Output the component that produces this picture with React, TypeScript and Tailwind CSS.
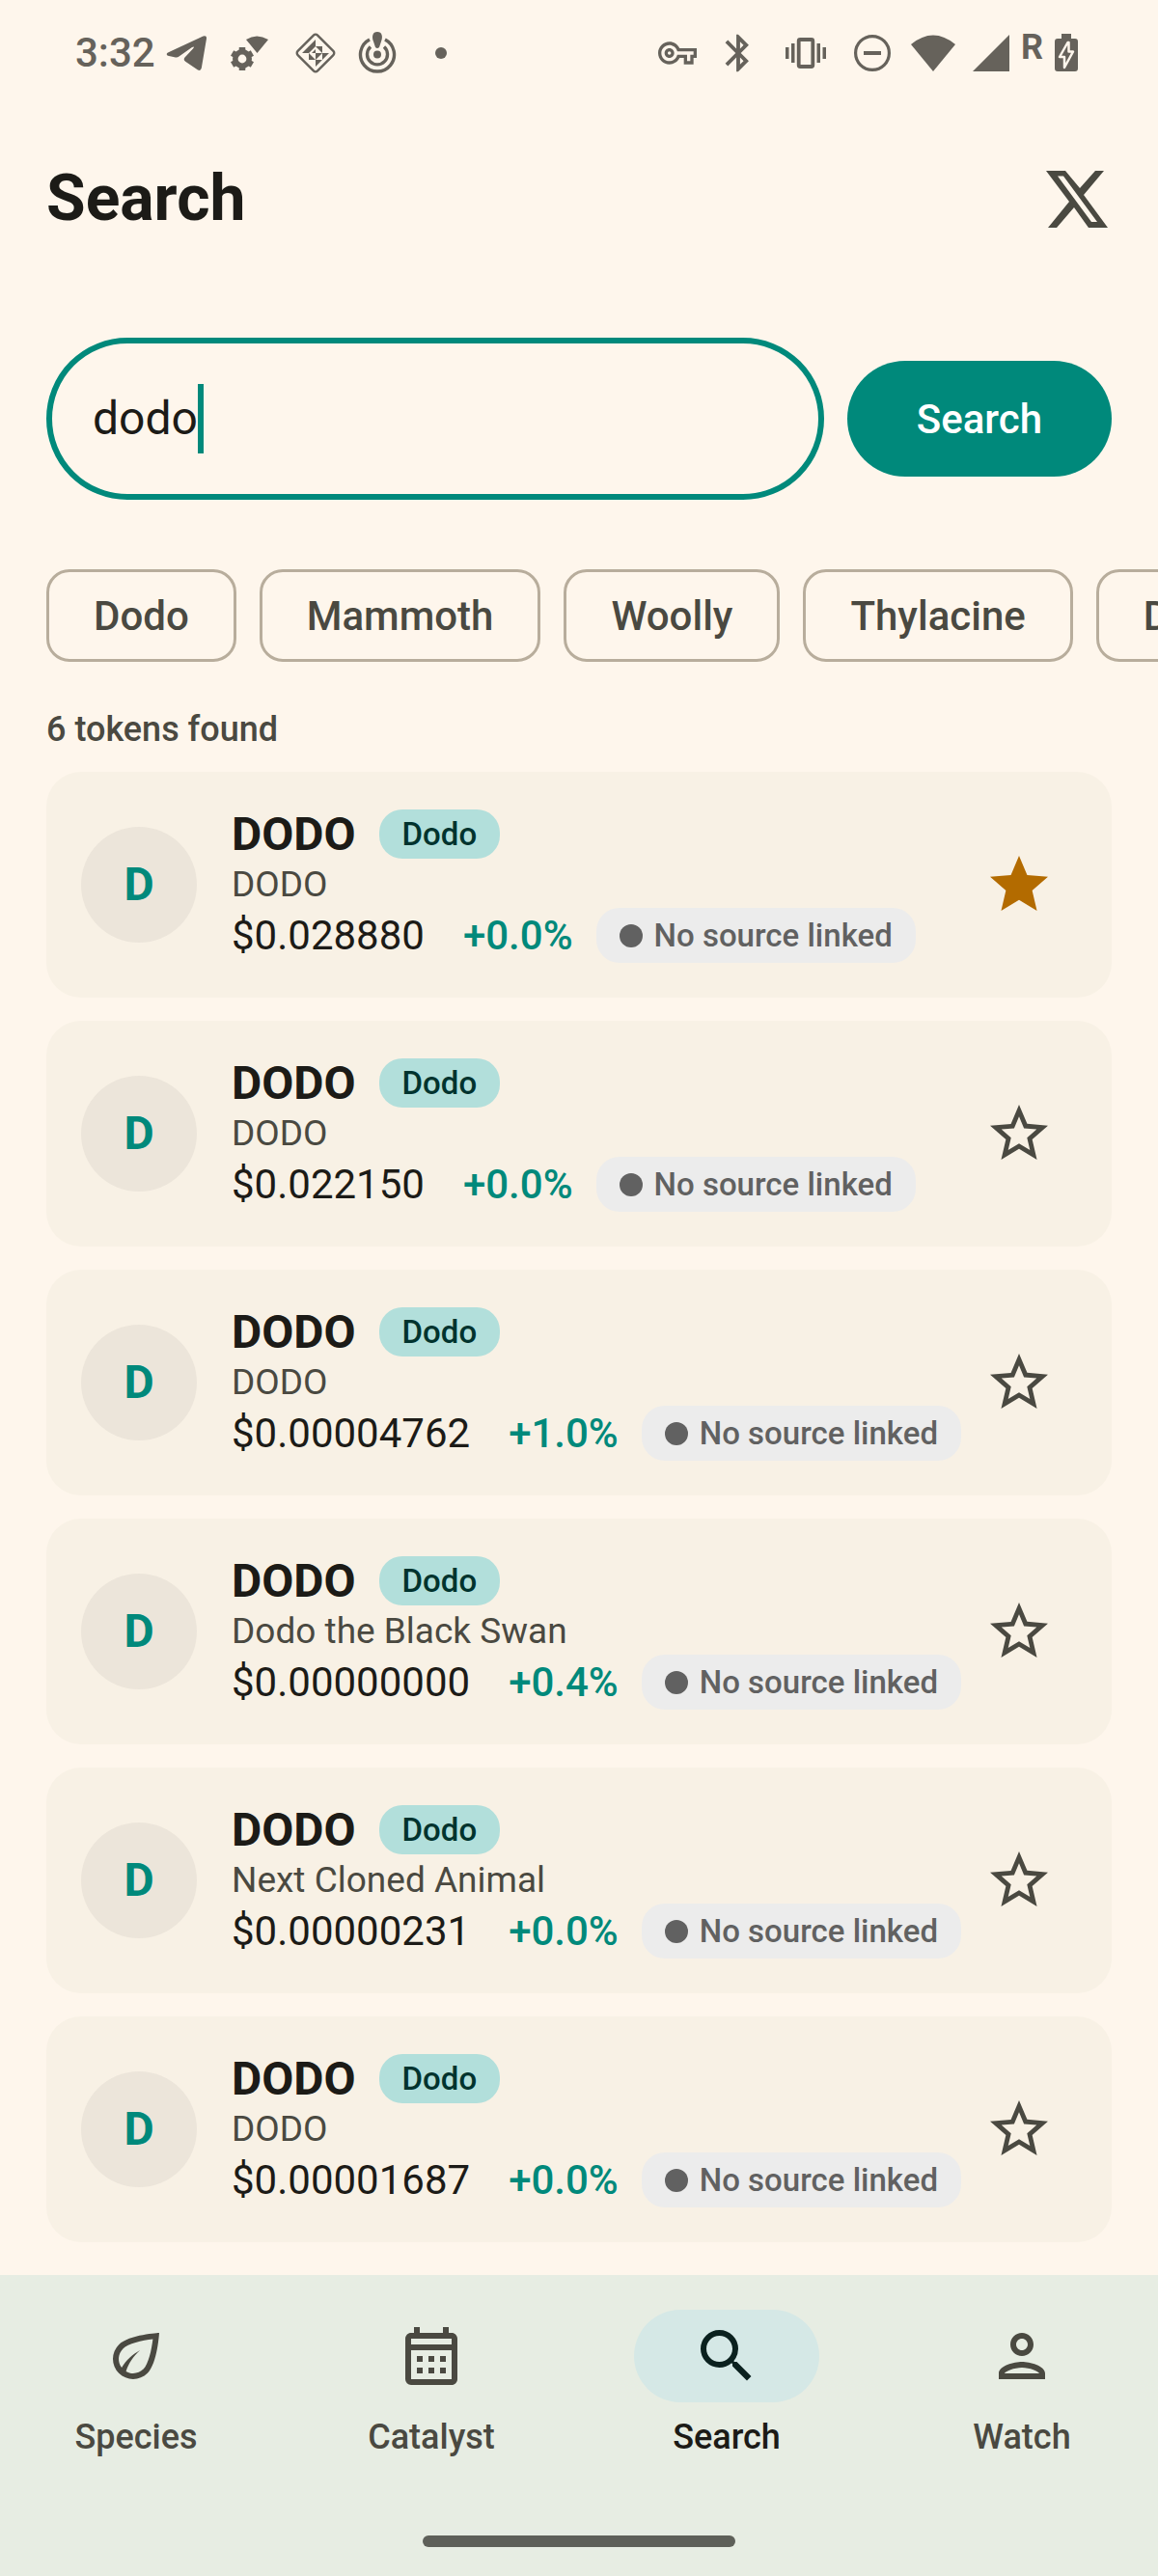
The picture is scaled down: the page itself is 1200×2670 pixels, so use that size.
import React, { useState } from 'react';
import {
    MdBluetooth,
    MdOutlineCalendarMonth,
    MdOutlineEco,
    MdOutlinePerson,
    MdOutlineVpnKey,
    MdSearch,
    MdStar,
    MdStarOutline,
} from 'react-icons/md';

interface Token {
    name: string;
    price: string;
    change: string;
    watched: boolean;
}

const initialTokens: Token[] = [
    { name: 'DODO', price: '$0.028880', change: '+0.0%', watched: true },
    { name: 'DODO', price: '$0.022150', change: '+0.0%', watched: false },
    { name: 'DODO', price: '$0.00004762', change: '+1.0%', watched: false },
    { name: 'Dodo the Black Swan', price: '$0.00000000', change: '+0.4%', watched: false },
    { name: 'Next Cloned Animal', price: '$0.00000231', change: '+0.0%', watched: false },
    { name: 'DODO', price: '$0.00001687', change: '+0.0%', watched: false },
];

const suggestions = ['Dodo', 'Mammoth', 'Woolly', 'Thylacine', 'Dire Wolf'];

const tabs = [
    { label: 'Species', icon: MdOutlineEco },
    { label: 'Catalyst', icon: MdOutlineCalendarMonth },
    { label: 'Search', icon: MdSearch },
    { label: 'Watch', icon: MdOutlinePerson },
];

const StatusBar: React.FC = () => (
    <div className="flex h-[110px] items-center justify-between pr-[83px] pl-[78px] text-[#66625b]">
        <div className="flex items-center">
            <span className="text-[42px] leading-[48px] font-medium">3:32</span>
            <svg className="ml-[10px] h-[40px] w-[44px]" viewBox="0 0 44 40" fill="currentColor">
                <path d="M3 19.500C1 20.500 1.500 22.500 4 23L11 24.500Q13 24.800 14.500 23.500L28 14Q31.500 12.500 29 15.500L20.500 24.500Q18.500 27 21.500 29L34 37.500Q37 39 37.800 35.500L43 5Q43.300 1.200 39.500 2.500Z" />
            </svg>
            <svg className="ml-6 h-[40px] w-[42px]" viewBox="0 0 42 40" fill="currentColor">
                <path d="M16 6Q27-1 39 6L27.500 20Z" />
                <g transform="translate(12 26)">
                    <circle r="7.200" fill="none" stroke="currentColor" strokeWidth="5.600" />
                    <path
                        d="M0-12V-7M0 7V12M-10.400-6L-6-3.500M6 3.500L10.400 6M-10.400 6L-6 3.500M6-3.500L10.400-6"
                        stroke="currentColor"
                        strokeWidth="6.500"
                    />
                </g>
            </svg>
            <svg className="ml-6 size-[44px]" viewBox="0 0 44 44" fill="currentColor">
                <rect x="7.500" y="7.500" width="29" height="29" rx="3" transform="rotate(45 22 22)" fill="none" stroke="currentColor" strokeWidth="2.400" />
                <path d="M22 8V15H15ZM8 22H15V15ZM15 15H22L15 22ZM22 15H29V22ZM22 22V18L18 22ZM15 22V29H22ZM22 22H29L22 29ZM29 22H36L29 29ZM22 29H29L22 36Z" />
            </svg>
            <svg className="ml-[22px] h-[44px] w-[40px]" viewBox="0 0 40 44" fill="none" stroke="currentColor" strokeWidth="3.400">
                <path d="M12 8A17.500 17.500 0 1 0 28 8M13 15.500A10.500 10.500 0 1 0 27 15.500" />
                <circle cx="20" cy="23.500" r="4" fill="currentColor" stroke="none" />
                <path d="M20 0C15 0 14 5 16 10L18 16Q20 18 22 16L24 10C26 5 25 0 20 0Z" fill="currentColor" stroke="none" />
            </svg>
            <span className="ml-10 size-3 rounded-full bg-[#66625b]" />
        </div>
        <div className="flex items-center">
            <MdOutlineVpnKey className="size-10" />
            <MdBluetooth className="ml-5 size-[46px]" />
            <svg className="ml-[26px] h-[32px] w-[42px]" viewBox="0 0 42 32" fill="currentColor">
                <path d="M0 10H3.500V22H0ZM6 6H9.500V26H6ZM32.500 6H36V26H32.500ZM38.500 10H42V22H38.500Z" />
                <rect x="13.700" y="2" width="14.600" height="28" rx="1.500" fill="none" stroke="currentColor" strokeWidth="3.800" />
            </svg>
            <svg className="ml-7 size-[40px]" viewBox="0 0 40 40" fill="none" stroke="currentColor" strokeWidth="3.200">
                <circle cx="20" cy="20" r="17.400" />
                <path d="M11 20H29" strokeWidth="4" />
            </svg>
            <svg className="ml-5 h-[38px] w-[46px]" viewBox="0 0 46 38" fill="currentColor">
                <path d="M0 10Q23-9 46 10L23 38Z" />
            </svg>
            <svg className="ml-[18px] size-[38px]" viewBox="0 0 38 38" fill="currentColor">
                <path d="M38 0V38H0Z" />
            </svg>
            <span className="mb-3 ml-3 text-[36px] leading-[36px] font-bold">R</span>
            <svg className="ml-3 h-[40px] w-[24px]" viewBox="0 0 24 40" fill="currentColor">
                <path d="M7 0H17V5H21Q24 5 24 8V36Q24 39 21 39H3Q0 39 0 36V8Q0 5 3 5H7Z" />
                <path d="M13.500 9L5 24H10V35L19 18.500H14.500V9Z" stroke="#fef6ec" strokeWidth="2.500" strokeLinejoin="round" />
            </svg>
        </div>
    </div>
);

const TokenCard: React.FC<{ token: Token; onToggle: () => void }> = ({ token, onToggle }) => (
    <li className="flex items-center rounded-[36px] bg-[#f8f1e5] py-9 pr-6 pl-9">
        <div className="flex size-[120px] shrink-0 items-center justify-center rounded-full bg-[#ece5da] text-[48px] font-bold text-[#00897b]">
            D
        </div>
        <div className="ml-9 min-w-0 flex-1 pt-[3px] whitespace-nowrap">
            <div className="flex h-[51px] items-center gap-6">
                <h2 className="text-[48px] leading-[51px] font-bold text-[#1c1b17]">DODO</h2>
                <span className="rounded-3xl bg-[#b2dfdb] px-6 text-[33px] leading-[51px] font-medium text-[#00332e]">
                    Dodo
                </span>
            </div>
            <p className="pt-[3px] text-[37px] leading-[48px] text-[#4a4941]">{token.name}</p>
            <div className="flex h-[57px] items-center">
                <span className="text-[42px] leading-[57px] text-[#1c1b17]">{token.price}</span>
                <span className="ml-10 text-[42px] leading-[57px] font-medium text-[#00897b]">{token.change}</span>
                <span className="ml-6 flex items-center gap-3 rounded-3xl bg-[#ececec] px-6 text-[33px] leading-[57px] font-medium text-[#616161]">
                    <span className="size-6 rounded-full bg-[#616161]" />
                    No source linked
                </span>
            </div>
        </div>
        <button
            type="button"
            aria-label={token.watched ? 'Remove from watchlist' : 'Add to watchlist'}
            onClick={onToggle}
            className="flex size-[144px] shrink-0 items-center justify-center"
        >
            {token.watched ? (
                <MdStar className="size-[72px] text-[#b36b00]" />
            ) : (
                <MdStarOutline className="size-[72px] text-[#4a4941]" />
            )}
        </button>
    </li>
);

const App: React.FC = () => {
    const [query, setQuery] = useState('dodo');
    const [tokens, setTokens] = useState<Token[]>(initialTokens);

    const toggleWatched = (index: number) => {
        setTokens(tokens.map((t, i) => (i === index ? { ...t, watched: !t.watched } : t)));
    };

    return (
        <div className="flex min-h-screen flex-col overflow-hidden bg-[#fef6ec] font-[Roboto,sans-serif]">
            <StatusBar />

            <header className="flex h-48 items-center justify-between px-12">
                <h1 className="text-[66px] leading-[84px] font-bold text-[#1c1b17]">Search</h1>
                <a href="#x" aria-label="X" className="mr-1">
                    <svg className="h-[60px] w-[64px]" viewBox="0 0 64 60" fill="#4a4941">
                        <path d="M0 1H20L35 19L51 1H60L39 26L64 60H44L29 39L11 60H2L24 33ZM12 6.500L47 54H53L18 6.500Z" fillRule="evenodd" />
                    </svg>
                </a>
            </header>

            <form className="mt-12 flex items-center gap-6 px-12" onSubmit={(e) => e.preventDefault()}>
                {/* Pole wyszukiwania z widocznym kursorem */}
                <label className="flex h-[168px] min-w-0 flex-1 items-center rounded-full border-6 border-[#00897b] px-[42px]">
                    <input
                        aria-label="Search tokens"
                        value={query}
                        onChange={(e) => setQuery(e.target.value)}
                        className="field-sizing-content bg-transparent text-[48px] leading-[72px] text-[#1c1b17] caret-transparent outline-none"
                    />
                    <span className="h-[72px] w-[6px] bg-[#00897b]" />
                </label>
                <button type="submit" className="h-[120px] rounded-full bg-[#00897b] px-[72px] text-[42px] font-medium text-white">
                    Search
                </button>
            </form>

            <div className="mt-[72px] flex gap-6 pl-12 whitespace-nowrap">
                {suggestions.map((name) => (
                    <button
                        key={name}
                        type="button"
                        onClick={() => setQuery(name)}
                        className="h-24 shrink-0 rounded-3xl border-3 border-[#b8ad9c] px-[46px] text-[42px] font-medium text-[#4a4941]"
                    >
                        {name}
                    </button>
                ))}
            </div>

            <main className="flex-1 px-12 pb-[34px]">
                <p className="mt-[46px] text-[36px] leading-[48px] font-medium text-[#4a4941]">6 tokens found</p>
                <ul className="mt-5 flex flex-col gap-6">
                    {tokens.map((token, index) => (
                        <TokenCard key={index} token={token} onToggle={() => toggleWatched(index)} />
                    ))}
                </ul>
            </main>

            <nav className="bg-[#e7ede3] pt-9 pb-[30px]">
                <div className="grid grid-cols-4 gap-6">
                    {tabs.map(({ label, icon: Icon }) => {
                        const active = label === 'Search';
                        return (
                            <a
                                key={label}
                                href={`#${label.toLowerCase()}`}
                                aria-current={active ? 'page' : undefined}
                                className={`flex flex-col items-center gap-3 ${active ? 'text-[#1c1b17]' : 'text-[#4a4941]'}`}
                            >
                                <span className={`flex h-24 w-48 items-center justify-center rounded-full ${active ? 'bg-[#d5e8e6] text-[#0b211f]' : ''}`}>
                                    <Icon className="size-[72px]" />
                                </span>
                                <span className="text-[36px] leading-[48px] font-medium">{label}</span>
                            </a>
                        );
                    })}
                </div>
                <div className="mx-auto mt-[78px] h-3 w-[324px] rounded-full bg-[#5e6059]" />
            </nav>
        </div>
    );
};

export default App;
